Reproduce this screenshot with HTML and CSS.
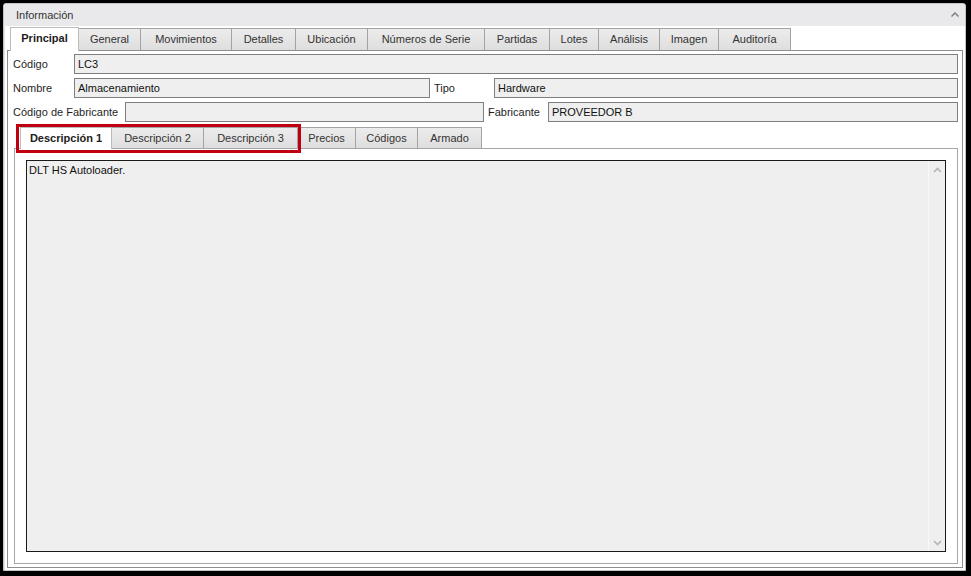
FILE: index.html
```html
<!DOCTYPE html>
<html lang="es">
  <head>
    <meta charset="UTF-8" />
    <title>Información del artículo</title>
    <link rel="stylesheet" href="styles.css">
  </head>
  <body>
    <div class="panel">
      <div class="panelHead">
        <span>Información</span>
        <svg class="collapse" width="8" height="5" viewBox="0 0 8 5">
          <path d="M0.5 4.5 L4 1 L7.5 4.5" fill="none" stroke="#7a7a7a" stroke-width="1.4" />
        </svg>
      </div>
      <div class="panelBody">
        <div class="tabs mainTabs">
          <div class="tab active">Principal</div>
          <div class="tab">General</div>
          <div class="tab">Movimientos</div>
          <div class="tab">Detalles</div>
          <div class="tab">Ubicación</div>
          <div class="tab">Números de Serie</div>
          <div class="tab">Partidas</div>
          <div class="tab">Lotes</div>
          <div class="tab">Análisis</div>
          <div class="tab">Imagen</div>
          <div class="tab">Auditoría</div>
        </div>
        <div class="tabPage mainPage">
          <div class="formRow">
            <label class="lbl">Código</label>
            <div class="field grow">LC3</div>
          </div>
          <div class="formRow">
            <label class="lbl">Nombre</label>
            <div class="field nombreField">Almacenamiento</div>
            <label class="lbl sideLbl">Tipo</label>
            <div class="field grow">Hardware</div>
          </div>
          <div class="formRow">
            <label class="lbl wideLbl">Código de Fabricante</label>
            <div class="field fabField"></div>
            <label class="lbl sideLbl">Fabricante</label>
            <div class="field grow">PROVEEDOR B</div>
          </div>

          <div class="tabs subTabs">
            <div class="highlight"></div>
            <div class="tab active">Descripción 1</div>
            <div class="tab">Descripción 2</div>
            <div class="tab">Descripción 3</div>
            <div class="tab">Precios</div>
            <div class="tab">Códigos</div>
            <div class="tab">Armado</div>
          </div>
          <div class="tabPage subPage">
            <div class="memo">
              <div class="memoText">DLT HS Autoloader.</div>
              <div class="memoScroll">
                <svg width="9" height="6" viewBox="0 0 9 6">
                  <path d="M1 5 L4.5 1.5 L8 5" fill="none" stroke="#b4b4b4" stroke-width="1.6" />
                </svg>
                <svg width="9" height="6" viewBox="0 0 9 6">
                  <path d="M1 1 L4.5 4.5 L8 1" fill="none" stroke="#b4b4b4" stroke-width="1.6" />
                </svg>
              </div>
            </div>
          </div>
        </div>
      </div>
    </div>
  </body>
</html>
```

FILE: styles.css
```css
* {
  box-sizing: border-box;
}

html,
body {
  height: 100%;
}

body {
  margin: 0;
  padding: 3px 5px 5px 3px;
  background-color: #000;
  font-family: "Liberation Sans", Arial, sans-serif;
  font-size: 11px;
  color: #1e1e1e;
}

.panel {
  height: 100%;
  display: flex;
  flex-direction: column;
  background-color: #fff;
  border: 1px solid #c4c4c8;
  border-radius: 3px 3px 0 0;
}

.panelHead {
  height: 22px;
  flex: none;
  display: flex;
  align-items: center;
  justify-content: space-between;
  padding: 0 6px 0 12px;
  background-color: #e9e9ec;
  color: #333;
  border-radius: 2px 2px 0 0;
}

.collapse {
  margin-top: -1px;
}

.panelBody {
  flex: 1;
  display: flex;
  flex-direction: column;
  padding: 1px 2px 2px 2px;
  border-left: 1px solid #e4e4e8;
}

/* tab strips */
.tabs {
  position: relative;
  display: flex;
  align-items: flex-end;
  flex: none;
}

.tab {
  height: 22px;
  line-height: 20px;
  text-align: center;
  white-space: nowrap;
  color: #333;
  background: linear-gradient(#ececec, #dedede);
  border: 1px solid #a3a3a3;
  border-bottom: none;
  margin-right: -1px;
}

.tab.active {
  position: relative;
  z-index: 1;
  height: 24px;
  margin-bottom: -1px;
  background: #fff;
  font-weight: bold;
  color: #1c1c1c;
  border-color: #bcbcbc;
}

.mainTabs {
  height: 23px;
  padding-left: 3px;
}

.mainTabs .tab {
  line-height: 21px;
}

.mainTabs .tab:nth-child(1) { width: 69px; }
.mainTabs .tab:nth-child(2) { width: 63px; }
.mainTabs .tab:nth-child(3) { width: 92px; }
.mainTabs .tab:nth-child(4) { width: 65px; }
.mainTabs .tab:nth-child(5) { width: 73px; }
.mainTabs .tab:nth-child(6) { width: 118px; }
.mainTabs .tab:nth-child(7) { width: 66px; }
.mainTabs .tab:nth-child(8) { width: 50px; }
.mainTabs .tab:nth-child(9) { width: 62px; }
.mainTabs .tab:nth-child(10) { width: 60px; }
.mainTabs .tab:nth-child(11) { width: 73px; }

.tabPage {
  background-color: #fff;
  border: 1px solid #8e8e8e;
}

.mainPage {
  flex: 1;
  display: flex;
  flex-direction: column;
  padding: 3px 4px 3px 5px;
}

/* form rows */
.formRow {
  display: flex;
  align-items: center;
  height: 20px;
  margin-bottom: 4px;
}

.lbl {
  width: 61px;
  flex: none;
}

.wideLbl {
  width: 112px;
}

.sideLbl {
  width: 60px;
  margin-left: 4px;
}

.field {
  height: 20px;
  line-height: 18px;
  padding: 0 3px;
  background-color: #efefef;
  border: 1px solid #7f7f7f;
  color: #111;
}

.field.grow {
  flex: 1;
}

.nombreField {
  width: 356px;
}

.fabField {
  width: 359px;
}

/* inner tabs */
.subTabs {
  height: 21px;
  margin: 1px 0 0 1px;
  padding-left: 6px;
}

.subTabs .tab {
  height: 21px;
}

.subTabs .tab.active {
  height: 22px;
}

.subTabs .tab:nth-child(2) { width: 92px; }
.subTabs .tab:nth-child(3) { width: 93px; }
.subTabs .tab:nth-child(4) { width: 95px; }
.subTabs .tab:nth-child(5) { width: 59px; }
.subTabs .tab:nth-child(6) { width: 63px; }
.subTabs .tab:nth-child(7) { width: 65px; }

.highlight {
  position: absolute;
  left: 2px;
  top: -3px;
  width: 285px;
  height: 29px;
  border: 3px solid #c00010;
  z-index: 2;
}

.subPage {
  flex: 1;
  display: flex;
  margin-left: 1px;
  padding: 11px 11px 11px 11px;
  border-color: #a6a6a6;
}

.memo {
  flex: 1;
  display: flex;
  background-color: #efefef;
  border: 1px solid #1a1a1a;
}

.memoText {
  flex: 1;
  padding: 3px 2px;
  color: #111;
}

.memoScroll {
  width: 17px;
  display: flex;
  flex-direction: column;
  justify-content: space-between;
  align-items: center;
  padding: 6px 0 5px;
  border-left: 1px solid #f8f8f8;
}
```
